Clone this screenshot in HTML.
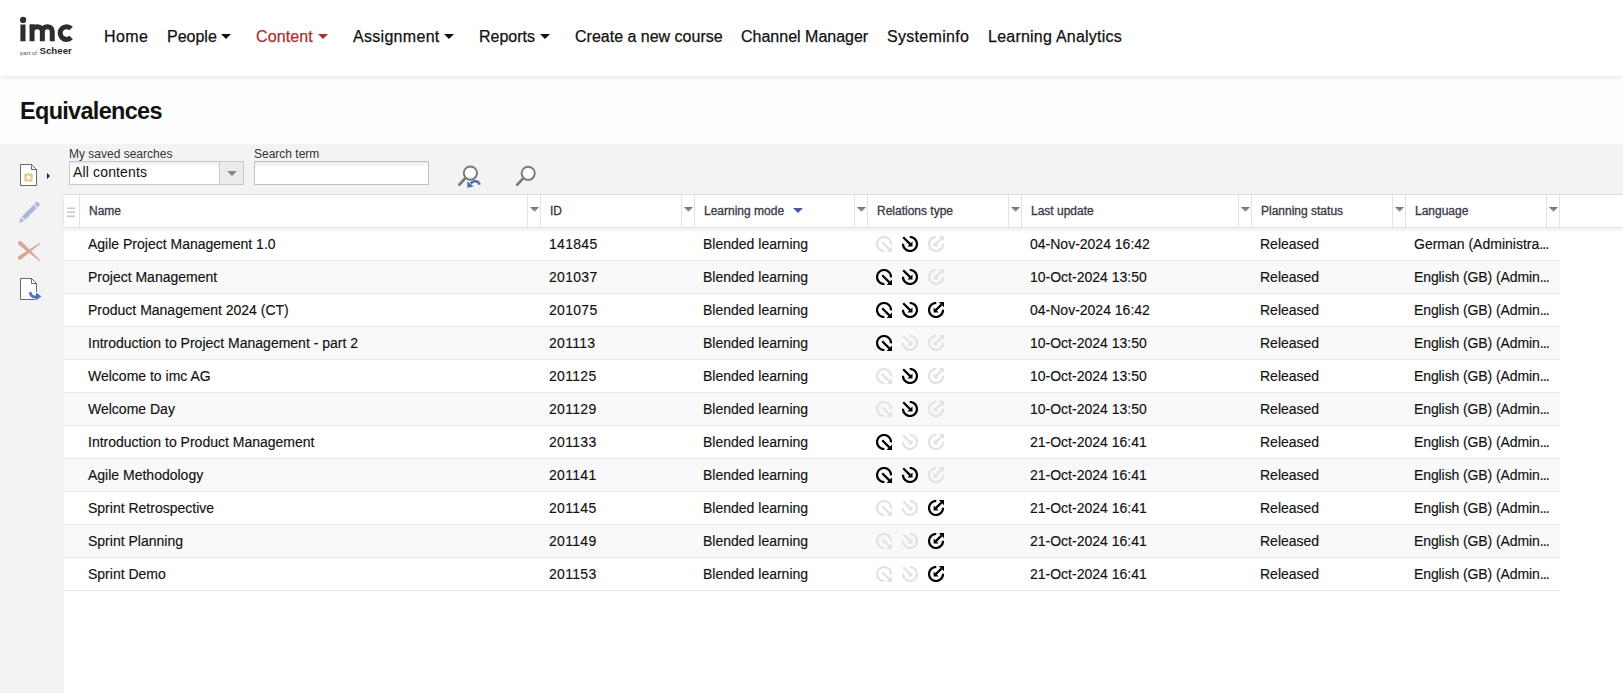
<!DOCTYPE html>
<html><head><meta charset="utf-8">
<style>
*{box-sizing:border-box;margin:0;padding:0}
html,body{width:1623px;height:693px;overflow:hidden;background:#fefefe;font-family:"Liberation Sans",sans-serif;color:#111}
.abs{position:absolute}
#hdr{position:absolute;left:0;top:0;width:1623px;height:76px;background:#fff;box-shadow:0 2px 5px rgba(0,0,0,0.09);z-index:2}
.nav{position:absolute;top:28px;font-size:16px;line-height:18px;color:#111;-webkit-text-stroke:0.25px #111;white-space:nowrap}
.nav.act{color:#a82f33;-webkit-text-stroke:0.25px #a82f33}
.caret{position:absolute;top:34px;width:10px;height:5px;background:#111;clip-path:polygon(0 0,100% 0,50% 100%)}
#title{position:absolute;left:20px;top:97px;font-size:23.5px;line-height:28px;font-weight:bold;letter-spacing:-0.7px;color:#111}
#tb{position:absolute;left:0;top:144px;width:1623px;height:549px;background:#f3f3f3}
.lbl{position:absolute;top:147px;font-size:12px;line-height:14px;color:#333}
#sel{position:absolute;left:69px;top:161px;width:175px;height:24px;background:linear-gradient(#ececec,#fff 5px);border:1px solid #c8c8c8}
#sel .txt{position:absolute;left:3px;top:2px;letter-spacing:0.15px;font-size:14px;line-height:16px;color:#111}
#sel .btn{position:absolute;right:0;top:0;width:24px;height:22px;background:#ececec;border-left:1px solid #c8c8c8}
#sel .btn:after{content:"";position:absolute;left:7px;top:9px;border-left:5px solid transparent;border-right:5px solid transparent;border-top:5px solid #888}
#inp{position:absolute;left:254px;top:161px;width:175px;height:24px;background:linear-gradient(#ebebeb,#fff 5px);border:1px solid #c0c0c0}
#grid{position:absolute;left:64px;top:194px;width:1559px;height:499px;background:#fff}
#ghead{position:absolute;left:0;top:0;width:1559px;height:34px;background:#fff;border-top:1px solid #dedede;border-bottom:1px solid #e2e2e2;box-shadow:0 2px 4px rgba(0,0,0,0.07);z-index:1}
.vl{position:absolute;top:0;width:1px;height:32px;background:#e2e2e2}
.ht{position:absolute;top:9px;font-size:12px;line-height:14px;color:#383844;-webkit-text-stroke:0.3px #383844;white-space:nowrap}
.dd{position:absolute;top:12px;width:9px;height:5px;background:linear-gradient(#6e6e6e,#a8a8a8);clip-path:polygon(0 0,100% 0,50% 100%)}
.row{position:absolute;left:0;width:1496px;height:33px;border-bottom:1px solid #e8e8e8}
.row.alt{background:#f9f9f9}
.c{position:absolute;top:8px;font-size:14px;line-height:16px;color:#111;-webkit-text-stroke:0.15px #111;white-space:nowrap}
.ic{position:absolute;top:8px;width:16px;height:16px}
.on{color:#000}
.el{letter-spacing:-0.9px}
.off{color:#e2e2e2}
</style></head><body>
<svg width="0" height="0" style="position:absolute">
<defs>
<symbol id="i1" viewBox="0 0 16 16"><path d="M15 8.4 A7 7 0 1 0 8.4 15" fill="none" stroke="currentColor" stroke-width="2.2"/><path d="M6.2 6.2 L13.4 13.4" stroke="currentColor" stroke-width="2.2"/><path d="M16 10.6 V16 H10.6 Z" fill="currentColor"/></symbol>
<symbol id="i2" viewBox="0 0 16 16"><path d="M7.7 1 A7 7 0 1 1 1 7.7" fill="none" stroke="currentColor" stroke-width="2.2"/><path d="M1.2 1.2 L8.4 8.4" stroke="currentColor" stroke-width="2.2"/><path d="M10.5 5.4 V10.5 H5.4 Z" fill="currentColor"/></symbol>
<symbol id="i3" viewBox="0 0 16 16"><path d="M8.3 1 A7 7 0 1 0 15 7.7" fill="none" stroke="currentColor" stroke-width="2.2"/><path d="M7.6 8.4 L13.4 2.6" stroke="currentColor" stroke-width="2.2"/><path d="M10.8 0 H16 V5.2 Z" fill="currentColor"/><path d="M5.6 5.4 V10.4 H10.6 Z" fill="currentColor"/></symbol>
</defs></svg>
<div id="hdr">
  <!-- logo -->
  <svg class="abs" style="left:0;top:0" width="80" height="60" viewBox="0 0 80 60">
    <circle cx="23.1" cy="19.9" r="3.1" fill="#2d2d2d"/>
    <rect x="20.4" y="24.5" width="5.1" height="16.8" fill="#2d2d2d"/>
    <path d="M32.05 41.3 V24.2 M32.05 31.5 C32.05 28.3 34.4 26.7 37.2 26.7 C40 26.7 42.35 28.3 42.35 31.5 V41.3 M42.35 31.5 C42.35 28.3 44.7 26.7 47.3 26.7 C50.1 26.7 52.25 28.3 52.25 31.5 V41.3" fill="none" stroke="#2d2d2d" stroke-width="5"/>
    <path d="M71.1 28.6 A6.4 6.4 0 1 0 71.1 37.6" fill="none" stroke="#2d2d2d" stroke-width="5"/>
    <text x="20" y="54.6" font-family="Liberation Sans" font-size="5.6" fill="#555" textLength="17" lengthAdjust="spacingAndGlyphs">part of</text>
    <text x="39.5" y="54.4" font-family="Liberation Sans" font-size="9.7" font-weight="bold" fill="#2d2d2d">Scheer</text>
  </svg>
  <div class="nav" style="left:104px;letter-spacing:0.4px">Home</div>
  <div class="nav" style="left:167px">People</div><div class="caret" style="left:221px"></div>
  <div class="nav act" style="left:256px;letter-spacing:0.1px">Content</div><div class="caret" style="left:318px;background:#a82f33"></div>
  <div class="nav" style="left:353px;letter-spacing:0.3px">Assignment</div><div class="caret" style="left:444px"></div>
  <div class="nav" style="left:479px">Reports</div><div class="caret" style="left:540px"></div>
  <div class="nav" style="left:575px">Create a new course</div>
  <div class="nav" style="left:741px">Channel Manager</div>
  <div class="nav" style="left:887px;letter-spacing:0.3px">Systeminfo</div>
  <div class="nav" style="left:988px;letter-spacing:0.23px">Learning Analytics</div>
</div>
<div id="title">Equivalences</div>
<div id="tb"></div>
<!-- sidebar icons -->
<svg class="abs" style="left:18px;top:162px" width="36" height="26" viewBox="0 0 36 26">
  <path d="M2.5 2.5 H13.5 L18.5 7.5 V23.5 H2.5 Z" fill="#fff" stroke="#6a6a6a" stroke-width="1" stroke-linejoin="miter"/>
  <path d="M13.5 2.5 V7.5 H18.5 Z" fill="#fff" stroke="#6a6a6a" stroke-width="1"/>
  <g fill="#e2cf86"><rect x="7.9" y="12.9" width="5.2" height="5.2"/><circle cx="7.9" cy="12.9" r="1.75"/><circle cx="10.5" cy="12.9" r="1.75"/><circle cx="13.1" cy="12.9" r="1.75"/><circle cx="7.9" cy="15.5" r="1.75"/><circle cx="13.1" cy="15.5" r="1.75"/><circle cx="7.9" cy="18.1" r="1.75"/><circle cx="10.5" cy="18.1" r="1.75"/><circle cx="13.1" cy="18.1" r="1.75"/></g><path d="M10.5 13.1 L12.9 15.5 L10.5 17.9 L8.1 15.5 Z" fill="#fff"/>
  <path d="M29 11 L32 14 L29 17 Z" fill="#1a1a28"/>
</svg>
<svg class="abs" style="left:16px;top:200px" width="26" height="26" viewBox="0 0 26 26">
  <path d="M5.84 16.54 L9.16 19.86 L20.96 8.06 L17.64 4.74 Z" fill="#a9b9da"/>
  <path d="M18.44 3.94 L21.76 7.26 L23.3 5.7 C24 5 24 4.2 23.3 3.5 L22 2.2 C21.3 1.5 20.5 1.5 19.8 2.2 Z" fill="#a9b9da"/>
  <path d="M5.04 17.34 L8.36 20.66 L2.7 23 Z" fill="#a9b9da"/>
</svg>
<svg class="abs" style="left:16px;top:238px" width="26" height="26" viewBox="0 0 26 26">
  <g fill="#d6a697"><path d="M2.61 6.46 L9.90 12.40 L23.70 23.14 L24.30 22.46 L11.97 10.06 L5.19 3.54 Z"/><circle cx="3.90" cy="5.00" r="1.95"/><path d="M4.93 21.39 L11.78 16.03 L24.26 5.77 L23.74 5.03 L9.96 13.49 L2.67 18.21 Z"/><circle cx="3.80" cy="19.80" r="1.95"/></g>
</svg>
<svg class="abs" style="left:18px;top:276px" width="26" height="28" viewBox="0 0 26 28">
  <path d="M2.5 2.5 H13.5 L18.5 7.5 V23.5 H2.5 Z" fill="#fff"/>
  <path d="M18.5 15.7 V7.5 L13.5 2.5 H2.5 V23.5 H16.8" fill="none" stroke="#6a6a6a" stroke-width="1"/>
  <path d="M13.5 2.5 V7.5 H18.5 Z" fill="#fff" stroke="#6a6a6a" stroke-width="1"/>
  <path d="M12.4 17.3 C13.4 20.6 16 21.4 19.4 20.8" fill="none" stroke="#4e6fb9" stroke-width="2.8" stroke-linecap="round"/>
  <path d="M18.2 16.6 L23.4 20.4 L17.6 24.6 Z" fill="#4e6fb9"/>
</svg>
<div class="lbl" style="left:69px">My saved searches</div>
<div class="lbl" style="left:254px">Search term</div>
<div id="sel"><div class="txt">All contents</div><div class="btn"></div></div>
<div id="inp"></div>
<svg class="abs" style="left:455px;top:162px" width="28" height="28" viewBox="0 0 28 28">
  <path d="M9.6 17 L4.4 22.6" stroke="#787878" stroke-width="2.8" stroke-linecap="round"/>
  <circle cx="15.4" cy="11.1" r="6.6" fill="#fff" stroke="#787878" stroke-width="1.9"/>
  <path d="M24.7 22.7 C23.5 19.2 19 17.6 15.6 21.4" fill="none" stroke="#4e6fb9" stroke-width="2.6"/>
  <path d="M12.3 19.2 L12.3 25.7 L18.6 24.6 Z" fill="#4e6fb9"/>
</svg>
<svg class="abs" style="left:512px;top:162px" width="28" height="28" viewBox="0 0 28 28">
  <path d="M10.2 17.4 L5.2 22.6" stroke="#787878" stroke-width="2.8" stroke-linecap="round"/>
  <circle cx="16.2" cy="11.3" r="6.6" fill="#fff" stroke="#787878" stroke-width="1.9"/>
</svg>
<div id="grid">
  <div id="ghead">
    <div class="vl" style="left:15px"></div>
    <svg class="abs" style="left:3px;top:12px" width="9" height="11" viewBox="0 0 9 11"><rect x="0" y="0.5" width="8" height="1.6" fill="#c8c8c8"/><rect x="0" y="4.5" width="8" height="1.6" fill="#c8c8c8"/><rect x="0" y="8.5" width="8" height="1.6" fill="#c8c8c8"/></svg>
    <div class="ht" style="left:25px">Name</div>
    <div class="vl" style="left:463px"></div><div class="dd" style="left:466px"></div><div class="vl" style="left:476px"></div>
    <div class="ht" style="left:486px">ID</div>
    <div class="vl" style="left:617px"></div><div class="dd" style="left:620px"></div><div class="vl" style="left:630px"></div>
    <div class="ht" style="left:640px">Learning mode</div>
    <div class="abs" style="left:729px;top:13px;width:0;height:0;border-left:5px solid transparent;border-right:5px solid transparent;border-top:5px solid #4a56a0"></div>
    <div class="vl" style="left:790px"></div><div class="dd" style="left:793px"></div><div class="vl" style="left:803px"></div>
    <div class="ht" style="left:813px">Relations type</div>
    <div class="vl" style="left:944px"></div><div class="dd" style="left:947px"></div><div class="vl" style="left:957px"></div>
    <div class="ht" style="left:967px">Last update</div>
    <div class="vl" style="left:1174px"></div><div class="dd" style="left:1177px"></div><div class="vl" style="left:1187px"></div>
    <div class="ht" style="left:1197px">Planning status</div>
    <div class="vl" style="left:1328px"></div><div class="dd" style="left:1331px"></div><div class="vl" style="left:1341px"></div>
    <div class="ht" style="left:1351px">Language</div>
    <div class="vl" style="left:1482px"></div><div class="dd" style="left:1485px"></div><div class="vl" style="left:1495px"></div>
  </div>
  <div id="rows">
<div class="row" style="top:34px"><div class="c" style="left:24px">Agile Project Management 1.0</div><div class="c" style="left:485px;letter-spacing:0.3px">141845</div><div class="c" style="left:639px">Blended learning</div><svg class="ic off" style="left:812px"><use href="#i1"/></svg><svg class="ic on" style="left:838px"><use href="#i2"/></svg><svg class="ic off" style="left:864px"><use href="#i3"/></svg><div class="c" style="left:966px">04-Nov-2024 16:42</div><div class="c" style="left:1196px">Released</div><div class="c" style="left:1350px">German (Administra<span class="el">...</span></div></div>
<div class="row alt" style="top:67px"><div class="c" style="left:24px">Project Management</div><div class="c" style="left:485px;letter-spacing:0.3px">201037</div><div class="c" style="left:639px">Blended learning</div><svg class="ic on" style="left:812px"><use href="#i1"/></svg><svg class="ic on" style="left:838px"><use href="#i2"/></svg><svg class="ic off" style="left:864px"><use href="#i3"/></svg><div class="c" style="left:966px">10-Oct-2024 13:50</div><div class="c" style="left:1196px">Released</div><div class="c" style="left:1350px;letter-spacing:-0.1px">English (GB) (Admin<span class="el">...</span></div></div>
<div class="row" style="top:100px"><div class="c" style="left:24px">Product Management 2024 (CT)</div><div class="c" style="left:485px;letter-spacing:0.3px">201075</div><div class="c" style="left:639px">Blended learning</div><svg class="ic on" style="left:812px"><use href="#i1"/></svg><svg class="ic on" style="left:838px"><use href="#i2"/></svg><svg class="ic on" style="left:864px"><use href="#i3"/></svg><div class="c" style="left:966px">04-Nov-2024 16:42</div><div class="c" style="left:1196px">Released</div><div class="c" style="left:1350px;letter-spacing:-0.1px">English (GB) (Admin<span class="el">...</span></div></div>
<div class="row alt" style="top:133px"><div class="c" style="left:24px">Introduction to Project Management - part 2</div><div class="c" style="left:485px;letter-spacing:0.3px">201113</div><div class="c" style="left:639px">Blended learning</div><svg class="ic on" style="left:812px"><use href="#i1"/></svg><svg class="ic off" style="left:838px"><use href="#i2"/></svg><svg class="ic off" style="left:864px"><use href="#i3"/></svg><div class="c" style="left:966px">10-Oct-2024 13:50</div><div class="c" style="left:1196px">Released</div><div class="c" style="left:1350px;letter-spacing:-0.1px">English (GB) (Admin<span class="el">...</span></div></div>
<div class="row" style="top:166px"><div class="c" style="left:24px">Welcome to imc AG</div><div class="c" style="left:485px;letter-spacing:0.3px">201125</div><div class="c" style="left:639px">Blended learning</div><svg class="ic off" style="left:812px"><use href="#i1"/></svg><svg class="ic on" style="left:838px"><use href="#i2"/></svg><svg class="ic off" style="left:864px"><use href="#i3"/></svg><div class="c" style="left:966px">10-Oct-2024 13:50</div><div class="c" style="left:1196px">Released</div><div class="c" style="left:1350px;letter-spacing:-0.1px">English (GB) (Admin<span class="el">...</span></div></div>
<div class="row alt" style="top:199px"><div class="c" style="left:24px">Welcome Day</div><div class="c" style="left:485px;letter-spacing:0.3px">201129</div><div class="c" style="left:639px">Blended learning</div><svg class="ic off" style="left:812px"><use href="#i1"/></svg><svg class="ic on" style="left:838px"><use href="#i2"/></svg><svg class="ic off" style="left:864px"><use href="#i3"/></svg><div class="c" style="left:966px">10-Oct-2024 13:50</div><div class="c" style="left:1196px">Released</div><div class="c" style="left:1350px;letter-spacing:-0.1px">English (GB) (Admin<span class="el">...</span></div></div>
<div class="row" style="top:232px"><div class="c" style="left:24px">Introduction to Product Management</div><div class="c" style="left:485px;letter-spacing:0.3px">201133</div><div class="c" style="left:639px">Blended learning</div><svg class="ic on" style="left:812px"><use href="#i1"/></svg><svg class="ic off" style="left:838px"><use href="#i2"/></svg><svg class="ic off" style="left:864px"><use href="#i3"/></svg><div class="c" style="left:966px">21-Oct-2024 16:41</div><div class="c" style="left:1196px">Released</div><div class="c" style="left:1350px;letter-spacing:-0.1px">English (GB) (Admin<span class="el">...</span></div></div>
<div class="row alt" style="top:265px"><div class="c" style="left:24px">Agile Methodology</div><div class="c" style="left:485px;letter-spacing:0.3px">201141</div><div class="c" style="left:639px">Blended learning</div><svg class="ic on" style="left:812px"><use href="#i1"/></svg><svg class="ic on" style="left:838px"><use href="#i2"/></svg><svg class="ic off" style="left:864px"><use href="#i3"/></svg><div class="c" style="left:966px">21-Oct-2024 16:41</div><div class="c" style="left:1196px">Released</div><div class="c" style="left:1350px;letter-spacing:-0.1px">English (GB) (Admin<span class="el">...</span></div></div>
<div class="row" style="top:298px"><div class="c" style="left:24px">Sprint Retrospective</div><div class="c" style="left:485px;letter-spacing:0.3px">201145</div><div class="c" style="left:639px">Blended learning</div><svg class="ic off" style="left:812px"><use href="#i1"/></svg><svg class="ic off" style="left:838px"><use href="#i2"/></svg><svg class="ic on" style="left:864px"><use href="#i3"/></svg><div class="c" style="left:966px">21-Oct-2024 16:41</div><div class="c" style="left:1196px">Released</div><div class="c" style="left:1350px;letter-spacing:-0.1px">English (GB) (Admin<span class="el">...</span></div></div>
<div class="row alt" style="top:331px"><div class="c" style="left:24px">Sprint Planning</div><div class="c" style="left:485px;letter-spacing:0.3px">201149</div><div class="c" style="left:639px">Blended learning</div><svg class="ic off" style="left:812px"><use href="#i1"/></svg><svg class="ic off" style="left:838px"><use href="#i2"/></svg><svg class="ic on" style="left:864px"><use href="#i3"/></svg><div class="c" style="left:966px">21-Oct-2024 16:41</div><div class="c" style="left:1196px">Released</div><div class="c" style="left:1350px;letter-spacing:-0.1px">English (GB) (Admin<span class="el">...</span></div></div>
<div class="row" style="top:364px"><div class="c" style="left:24px">Sprint Demo</div><div class="c" style="left:485px;letter-spacing:0.3px">201153</div><div class="c" style="left:639px">Blended learning</div><svg class="ic off" style="left:812px"><use href="#i1"/></svg><svg class="ic off" style="left:838px"><use href="#i2"/></svg><svg class="ic on" style="left:864px"><use href="#i3"/></svg><div class="c" style="left:966px">21-Oct-2024 16:41</div><div class="c" style="left:1196px">Released</div><div class="c" style="left:1350px;letter-spacing:-0.1px">English (GB) (Admin<span class="el">...</span></div></div>
</div>
</div>
</body></html>
